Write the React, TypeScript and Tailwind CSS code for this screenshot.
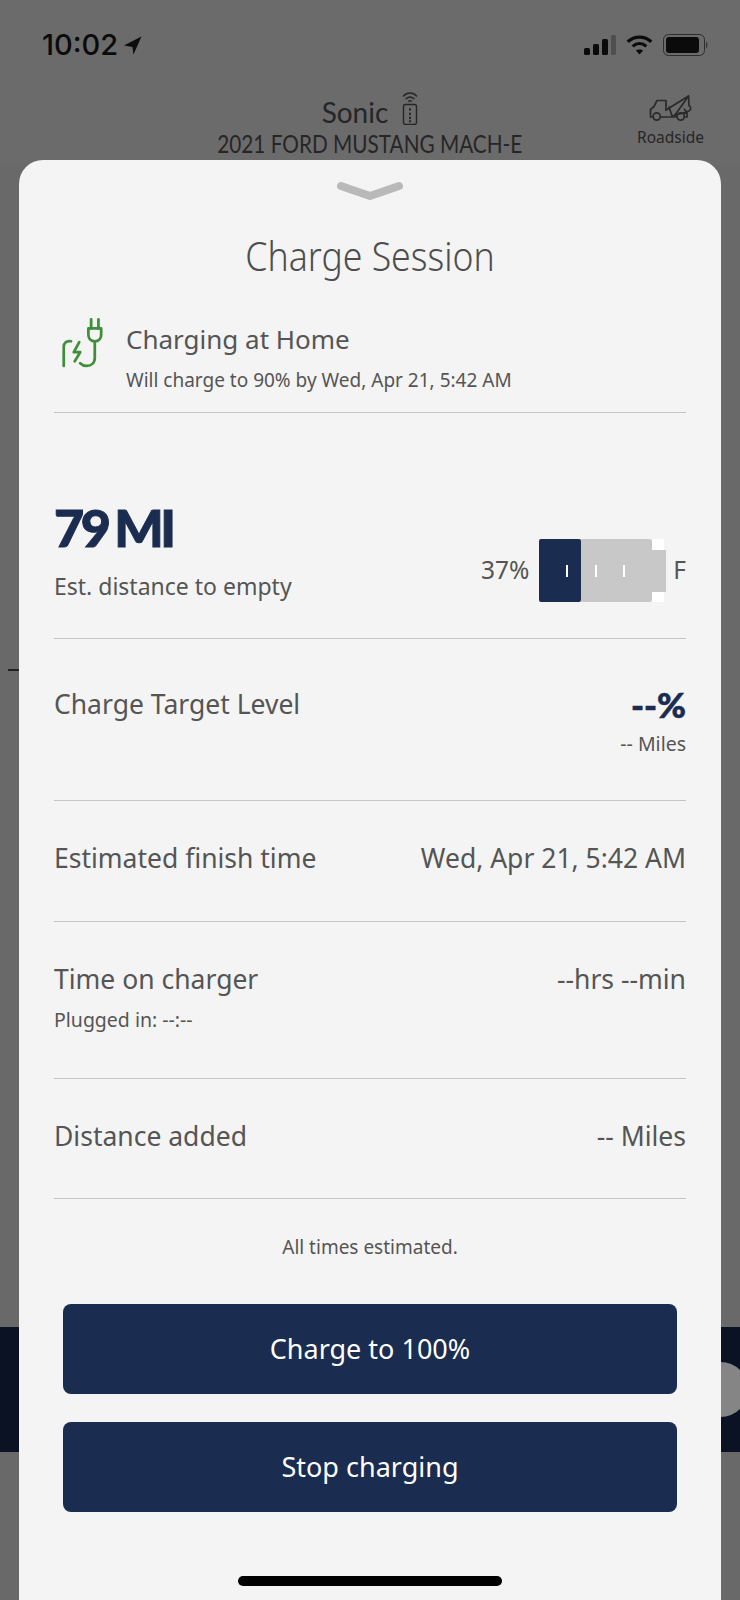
import React from "react";

const BODY = "font-['Noto_Sans','Open_Sans',sans-serif]";
const HEAD = "font-['Lato','Noto_Sans',sans-serif]";

function LocationArrow() {
  return (
    <svg width="19" height="19" viewBox="0 0 20 20" className="ml-[5px]">
      <path d="M19.5 0.5 L1 10 L10 11.5 L11 19.5 Z" fill="#0d0d0d" />
    </svg>
  );
}

function Signal() {
  return (
    <svg width="32" height="20" viewBox="0 0 32 20">
      <rect x="0" y="13" width="6" height="7" rx="1.5" fill="#0b0b0b" />
      <rect x="9" y="9" width="6" height="11" rx="1.5" fill="#0b0b0b" />
      <rect x="18" y="4" width="6" height="16" rx="1.5" fill="#0b0b0b" />
      <rect x="27" y="0" width="5" height="20" rx="1.5" fill="#4f4f4f" />
    </svg>
  );
}

function Wifi() {
  return (
    <svg width="29" height="20" viewBox="0 0 30 22" fill="none" stroke="#0b0b0b" strokeWidth="3.6">
      <path d="M2 7.5 C9.5 0.5 20.5 0.5 28 7.5" />
      <path d="M7.5 12.5 C12 8.6 18 8.6 22.5 12.5" />
      <path d="M15 21.5 L11 17 C13 15.5 17 15.5 19 17 Z" fill="#0b0b0b" stroke="none" />
    </svg>
  );
}

function Battery() {
  return (
    <svg width="46" height="22" viewBox="0 0 46 22">
      <rect x="0.5" y="0.5" width="41" height="21" rx="5" fill="none" stroke="#2d2d2d" />
      <rect x="3" y="3" width="33" height="16" rx="3" fill="#0b0b0b" />
      <path d="M43 7.5 C45 8.5 45 13.5 43 14.5 Z" fill="#3a3a3a" />
    </svg>
  );
}

function Remote() {
  return (
    <svg width="16" height="34" viewBox="0 0 16 34" fill="none" stroke="#262626" strokeWidth="1.4" strokeLinecap="round">
      <path d="M1.5 5 C5 1 11 1 14.5 5" />
      <path d="M4 7.8 C6.5 5.5 9.5 5.5 12 7.8" />
      <path d="M6.5 10.2 C7.5 9.5 8.5 9.5 9.5 10.2" />
      <rect x="1.5" y="13.5" width="13" height="20" rx="2" />
      <path d="M8 18 V18.8 M8 22.5 V23.3 M8 26.5 V27.3 M8 30 V30.6" strokeWidth="2" />
    </svg>
  );
}

function TowTruck() {
  return (
    <svg width="44" height="27" viewBox="0 0 44 27" fill="none" stroke="#2a2a2a" strokeWidth="1.7" strokeLinejoin="round" strokeLinecap="round">
      <path d="M4 22 H1.5 V14.5 L5 11.5 L8 5.5 H17 V15" />
      <path d="M11.5 22 H28 M35.5 22 H38 V17 L23 21 L20 12" />
      <path d="M17 15 L39.5 1 L40 10.5 C42.5 12 42 16 39 16.5 C37 16.8 35.5 15.5 35.5 14" />
      <path d="M39.5 1 L26 20" />
      <circle cx="7.7" cy="21.5" r="3.6" />
      <circle cx="31.7" cy="21.5" r="3.6" />
    </svg>
  );
}

function PlugIcon() {
  return (
    <svg width="42" height="54" viewBox="0 0 46 56" fill="none" stroke="#3f8f3a" strokeWidth="3" strokeLinecap="round" strokeLinejoin="round">
      <path d="M33 1 V11 M41 1 V11" />
      <path d="M30 11 H44 V18 C44 22 41 25 37 25 C33 25 30 22 30 18 Z" />
      <path d="M37 25 V43 C37 49 33 52 28 52 C25 52 23 51 21 49" />
      <path d="M3 52 V31 C3 27 6 24 11 25" />
      <path d="M20 26 L14 37 H21 L15 47" strokeWidth="3" />
    </svg>
  );
}

function Row({ left, sub, right, rightSub, className }: { left: string; sub?: string; right: React.ReactNode; rightSub?: string; className: string }) {
  return (
    <div className={`flex justify-between border-b border-[#c4c4c4] ${className}`}>
      <div>
        <div className="text-[26.5px] leading-[32px] text-[#555555]">{left}</div>
        {sub && <div className="mt-[14px] text-[19.5px] leading-[22px] text-[#555555]">{sub}</div>}
      </div>
      <div className="text-right">
        <div className="text-[26.5px] leading-[32px] text-[#555555]">{right}</div>
        {rightSub && <div className="mt-[9px] text-[19.5px] leading-[22px] text-[#555555]">{rightSub}</div>}
      </div>
    </div>
  );
}

function BatteryGauge() {
  return (
    <div className="flex items-center">
      <span className="mr-[10px] text-[24.5px] text-[#555555]">37%</span>
      <div className="flex items-center">
        <div className="relative h-[63px] w-[42px] rounded-[2px] bg-[#1a2c4f]">
          <span className="absolute left-[27px] top-[26px] h-[12px] w-[2px] bg-white" />
        </div>
        <div className="relative h-[63px] w-[71px] rounded-r-[2px] bg-[#c8c8c8]">
          <span className="absolute left-[14px] top-[26px] h-[12px] w-[2px] bg-white" />
          <span className="absolute left-[42px] top-[26px] h-[12px] w-[2px] bg-white" />
        </div>
        <div className="flex h-[63px] w-[14px] flex-col">
          <div className="h-[11px] w-[12px] bg-white" />
          <div className="h-[42px] bg-[#c8c8c8]" />
          <div className="h-[10px] w-[12px] bg-white" />
        </div>
      </div>
      <span className="ml-[7px] text-[24.5px] text-[#555555]">F</span>
    </div>
  );
}

export default function App() {
  return (
    <div className={`relative h-[1600px] w-[740px] overflow-hidden bg-[#696969] ${BODY}`}>
      {/* Dimmed screen behind the sheet */}
      <div className="flex h-[165px] flex-col bg-[#6b6b6b]">
        <div className="flex items-center justify-between pl-[42px] pr-[31px] pt-[33px]">
          <div className="flex items-center">
            <span className="font-['Inter',sans-serif] text-[29px] font-medium leading-[24px] text-[#0b0b0b]">10:02</span>
            <LocationArrow />
          </div>
          <div className="flex items-center gap-[9px]">
            <Signal />
            <Wifi />
            <Battery />
          </div>
        </div>
        <div className="mt-[34px] grid grid-cols-[1fr_auto_1fr]">
          <div />
          <div className={`flex flex-col items-center ${HEAD}`}>
            <div className="flex items-end gap-[14px]">
              <span className="text-[28px] leading-[26px] text-[#262626]">Sonic</span>
              <Remote />
            </div>
            <div className="mt-[3px] scale-x-[0.83] whitespace-nowrap text-[25px] leading-[30px] text-[#262626]">2021 FORD MUSTANG MACH-E</div>
          </div>
          <div className="flex flex-col items-end pr-[36px]">
            <div className="mr-[11px] mt-[4px]"><TowTruck /></div>
            <span className="mt-[6px] text-[15.5px] leading-[18px] text-[#262626]">Roadside</span>
          </div>
        </div>
      </div>
      <div className="absolute left-[8px] top-[669px] h-[2px] w-[11px] bg-[#222222]" />
      <div className="absolute left-0 top-[1327px] h-[125px] w-[740px] bg-[#0b1224]" />
      <div className="absolute left-[693px] top-[1362px] h-[55px] w-[55px] rounded-full bg-[#858585]" />

      {/* Charge session sheet */}
      <div className="absolute left-[19px] top-[160px] h-[1440px] w-[702px] rounded-t-[24px] bg-[#f4f4f4] px-[35px]">
        <div className="flex justify-center pt-[21px]">
          <svg width="66" height="22" viewBox="0 0 66 22">
            <path d="M4 5 L33 15 L62 5" fill="none" stroke="#b9b9b9" strokeWidth="8" strokeLinecap="round" strokeLinejoin="round" />
          </svg>
        </div>
        <h1 className="mt-[28px] scale-x-[0.89] text-center text-[40px] font-light leading-[50px] text-[#4d4d4d]">Charge Session</h1>
        <div className="mt-[34px] flex h-[98px] items-start border-b border-[#c4c4c4]">
          <div className="ml-[7px] mt-[2px] w-[65px] shrink-0"><PlugIcon /></div>
          <div>
            <div className="mt-[8px] text-[26px] leading-[32px] text-[#555555]">Charging at Home</div>
            <div className="mt-[13px] text-[19px] leading-[24px] text-[#555555]">Will charge to 90% by Wed, Apr 21, 5:42 AM</div>
          </div>
        </div>
        <div className="flex h-[226px] items-start justify-between border-b border-[#c4c4c4]">
          <div>
            <div className={`mt-[86px] text-[52px] font-black leading-[56px] tracking-[-3.5px] [word-spacing:-2px] [-webkit-text-stroke:1px_#1a2c4f] text-[#1a2c4f] ${HEAD}`}>79 MI</div>
            <div className="mt-[17px] text-[23px] leading-[28px] text-[#555555]">Est. distance to empty</div>
          </div>
          <div className="mt-[126px]"><BatteryGauge /></div>
        </div>
        <Row className="h-[162px] pt-[49px]" left="Charge Target Level" right={<span className={`text-[35px] font-black leading-[32px] [-webkit-text-stroke:0.6px_#1a2c4f] text-[#1a2c4f] ${HEAD}`}>--%</span>} rightSub="-- Miles" />
        <Row className="h-[121px] pt-[41px]" left="Estimated finish time" right="Wed, Apr 21, 5:42 AM" />
        <Row className="h-[157px] pt-[41px]" left="Time on charger" sub="Plugged in: --:--" right="--hrs --min" />
        <Row className="h-[120px] pt-[41px]" left="Distance added" right="-- Miles" />
        <div className="mt-[36px] text-center text-[19px] leading-[24px] text-[#555555]">All times estimated.</div>
        <div className="mx-[9px] mt-[45px] flex flex-col gap-[28px]">
          <button className="h-[90px] rounded-[8px] bg-[#1a2c4f] text-[27px] text-white">Charge to 100%</button>
          <button className="h-[90px] rounded-[8px] bg-[#1a2c4f] text-[27px] text-white">Stop charging</button>
        </div>
      </div>

      {/* Home indicator */}
      <div className="absolute left-[238px] top-[1576px] h-[10px] w-[264px] rounded-full bg-black" />
    </div>
  );
}
